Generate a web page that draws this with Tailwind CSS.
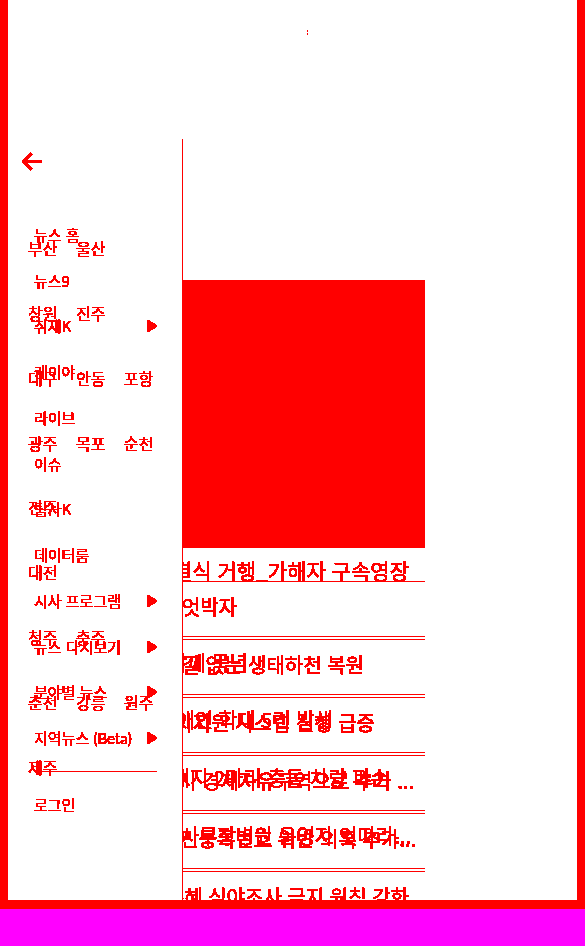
<!DOCTYPE html>
<html lang="ko">
<head>
<meta charset="utf-8">
<meta name="viewport" content="width=device-width, initial-scale=1">
<title>뉴스</title>
<script src="https://cdn.jsdelivr.net/npm/@tailwindcss/browser@4"></script>
</head>
<body class="min-h-screen bg-[#ff00ff] font-['Noto_Sans_CJK_KR',sans-serif] text-[#ff0000]">
<svg class="absolute size-0" aria-hidden="true">
  <filter id="crisp" x="-10%" y="-30%" width="120%" height="160%" color-interpolation-filters="sRGB">
    <feComponentTransfer><feFuncA type="discrete" tableValues="0 1 1 1 1 1 1 1 1 1 1 1 1 1 1 1 1 1 1 1"/></feComponentTransfer>
  </filter>
</svg>
<div class="relative h-[909px] overflow-hidden border-x-8 border-b-9 border-[#ff0000] bg-white">
  <header class="flex h-[280px] justify-center pt-[30px] pl-[30px]">
    <span class="flex h-[5px] w-px flex-col justify-between" aria-hidden="true"><i class="h-[2px] bg-[#ff0000]"></i><i class="h-[2px] bg-[#ff0000]"></i></span>
  </header>

  <main class="w-[417px] whitespace-nowrap text-[20px] leading-[24px]">
    <div class="h-[268px] bg-[#ff0000]"></div>
    <h1 class="flex h-[34px] items-center justify-end border-b border-[#ff0000] pt-[10px] pr-4 text-[21px]"><a href="#" class="[filter:url(#crisp)]">영결식 거행_가해자 구속영장</a></h1>
    <div class="relative">
      <ul>
        <li class="flex h-[58px] items-center justify-end border-b border-[#ff0000] pr-[188px] pb-[7px]"><a href="#" class="[filter:url(#crisp)]">정책 엇박자</a></li>
        <li class="flex h-[58px] items-center justify-end border-b border-[#ff0000] pr-[61px] pb-[7px]"><a href="#" class="[filter:url(#crisp)]">물길 없는 생태하천 복원</a></li>
        <li class="flex h-[58px] items-center justify-end border-b border-[#ff0000] pr-[50px] pb-[7px]"><a href="#" class="[filter:url(#crisp)]">복지지원 시스템 신청 급증</a></li>
        <li class="flex h-[58px] items-center justify-end border-b border-[#ff0000] pr-[11px] pb-[7px]"><a href="#" class="[filter:url(#crisp)]">광주시 경제자유구역으로 추가 ...</a></li>
        <li class="flex h-[58px] items-center justify-end border-b border-[#ff0000] pr-[9px] pb-[7px]"><a href="#" class="[filter:url(#crisp)]">주민등록번호 위반 의혹 추가...</a></li>
        <li class="flex h-[58px] items-center justify-end border-b border-[#ff0000] pr-4 pb-[7px]"><a href="#" class="[filter:url(#crisp)]">특혜 심야조사 금지 원칙 강화</a></li>
      </ul>
      <ul class="absolute inset-x-0 top-[54px]">
        <li class="flex h-[59px] items-center justify-end border-y border-[#ff0000] pr-[177px] pb-[5px]"><a href="#" class="[filter:url(#crisp)]">함께 묵념</a></li>
        <li class="flex h-[58px] items-center justify-end border-b border-[#ff0000] pr-[92px] pb-[7px]"><a href="#" class="[filter:url(#crisp)]">장애인 학대 5건 발생</a></li>
        <li class="flex h-[58px] items-center justify-end border-b border-[#ff0000] pr-9 pb-[7px]"><a href="#" class="[filter:url(#crisp)]">멧돼지 2마리 충돌 차량 파손</a></li>
        <li class="flex h-[58px] items-center justify-end border-b border-[#ff0000] pr-[14px] pb-[7px]"><a href="#" class="[filter:url(#crisp)]">사무장병원 운영자 잇따라...</a></li>
      </ul>
    </div>
  </main>

  <aside class="absolute top-[139px] bottom-0 left-0 w-[175px] border-r border-[#ff0000] bg-white">
    <button type="button" aria-label="닫기" class="mt-[11px] ml-3 block p-[2px]">
      <svg class="block" width="20" height="20" viewBox="0 0 20 20" fill="none" stroke="#ff0000" stroke-width="3" shape-rendering="crispEdges"><path d="M20 9.500H1.500M10 1L1.500 9.500L10 18"/></svg>
    </button>
    <nav aria-label="주요 메뉴" class="mt-[38px] pr-[25px] pl-[26px] text-[15px] leading-[20px]">
      <ul class="grid h-[549px] grid-rows-12">
        <li class="flex items-center"><a href="#" class="[filter:url(#crisp)]">뉴스 홈</a></li>
        <li class="flex items-center"><a href="#" class="[filter:url(#crisp)]">뉴스9</a></li>
        <li class="flex items-center justify-between"><a href="#" class="[filter:url(#crisp)]">취재K</a><button type="button" aria-label="취재K 하위 메뉴"><svg class="block" width="10" height="12" fill="#ff0000" shape-rendering="crispEdges"><path d="M0 0h2l8 5v2l-8 5H0z"/></svg></button></li>
        <li class="flex items-center"><a href="#" class="[filter:url(#crisp)]">케이야</a></li>
        <li class="flex items-center"><a href="#" class="[filter:url(#crisp)]">라이브</a></li>
        <li class="flex items-center"><a href="#" class="[filter:url(#crisp)]">이슈</a></li>
        <li class="flex items-center"><a href="#" class="[filter:url(#crisp)]">탐사K</a></li>
        <li class="flex items-center"><a href="#" class="[filter:url(#crisp)]">데이터룸</a></li>
        <li class="flex items-center justify-between"><a href="#" class="[filter:url(#crisp)]">시사 프로그램</a><button type="button" aria-label="시사 프로그램 하위 메뉴"><svg class="block" width="10" height="12" fill="#ff0000" shape-rendering="crispEdges"><path d="M0 0h2l8 5v2l-8 5H0z"/></svg></button></li>
        <li class="flex items-center justify-between"><a href="#" class="[filter:url(#crisp)]">뉴스 다시보기</a><button type="button" aria-label="뉴스 다시보기 하위 메뉴"><svg class="block" width="10" height="12" fill="#ff0000" shape-rendering="crispEdges"><path d="M0 0h2l8 5v2l-8 5H0z"/></svg></button></li>
        <li class="flex items-center justify-between"><a href="#" class="[filter:url(#crisp)]">분야별 뉴스</a><button type="button" aria-label="분야별 뉴스 하위 메뉴"><svg class="block" width="10" height="12" fill="#ff0000" shape-rendering="crispEdges"><path d="M0 0h2l8 5v2l-8 5H0z"/></svg></button></li>
        <li class="flex items-center justify-between"><a href="#" class="[filter:url(#crisp)]">지역뉴스 <span class="font-['Lato',sans-serif]">(Beta)</span></a><button type="button" aria-label="지역뉴스 하위 메뉴"><svg class="block" width="10" height="12" fill="#ff0000" shape-rendering="crispEdges"><path d="M0 0h2l8 5v2l-8 5H0z"/></svg></button></li>
      </ul>
      <div class="mt-[10px] border-t border-[#ff0000] pt-[23px]"><a href="#" class="block w-max [filter:url(#crisp)]">로그인</a></div>
    </nav>
    <nav aria-label="지역 뉴스" class="absolute top-[77px] left-5 w-36 text-[16px] leading-[20px]">
      <ul class="grid h-[583px] grid-rows-9">
        <li class="grid grid-cols-3 items-center"><a href="#" class="[filter:url(#crisp)]">부산</a><a href="#" class="[filter:url(#crisp)]">울산</a></li>
        <li class="grid grid-cols-3 items-center"><a href="#" class="[filter:url(#crisp)]">창원</a><a href="#" class="[filter:url(#crisp)]">진주</a></li>
        <li class="grid grid-cols-3 items-center"><a href="#" class="[filter:url(#crisp)]">대구</a><a href="#" class="[filter:url(#crisp)]">안동</a><a href="#" class="[filter:url(#crisp)]">포항</a></li>
        <li class="grid grid-cols-3 items-center"><a href="#" class="[filter:url(#crisp)]">광주</a><a href="#" class="[filter:url(#crisp)]">목포</a><a href="#" class="[filter:url(#crisp)]">순천</a></li>
        <li class="grid grid-cols-3 items-center"><a href="#" class="[filter:url(#crisp)]">전주</a></li>
        <li class="grid grid-cols-3 items-center"><a href="#" class="[filter:url(#crisp)]">대전</a></li>
        <li class="grid grid-cols-3 items-center"><a href="#" class="[filter:url(#crisp)]">청주</a><a href="#" class="[filter:url(#crisp)]">충주</a></li>
        <li class="grid grid-cols-3 items-center"><a href="#" class="[filter:url(#crisp)]">춘천</a><a href="#" class="[filter:url(#crisp)]">강릉</a><a href="#" class="[filter:url(#crisp)]">원주</a></li>
        <li class="grid grid-cols-3 items-center"><a href="#" class="[filter:url(#crisp)]">제주</a></li>
      </ul>
    </nav>
  </aside>
</div>
</body>
</html>
